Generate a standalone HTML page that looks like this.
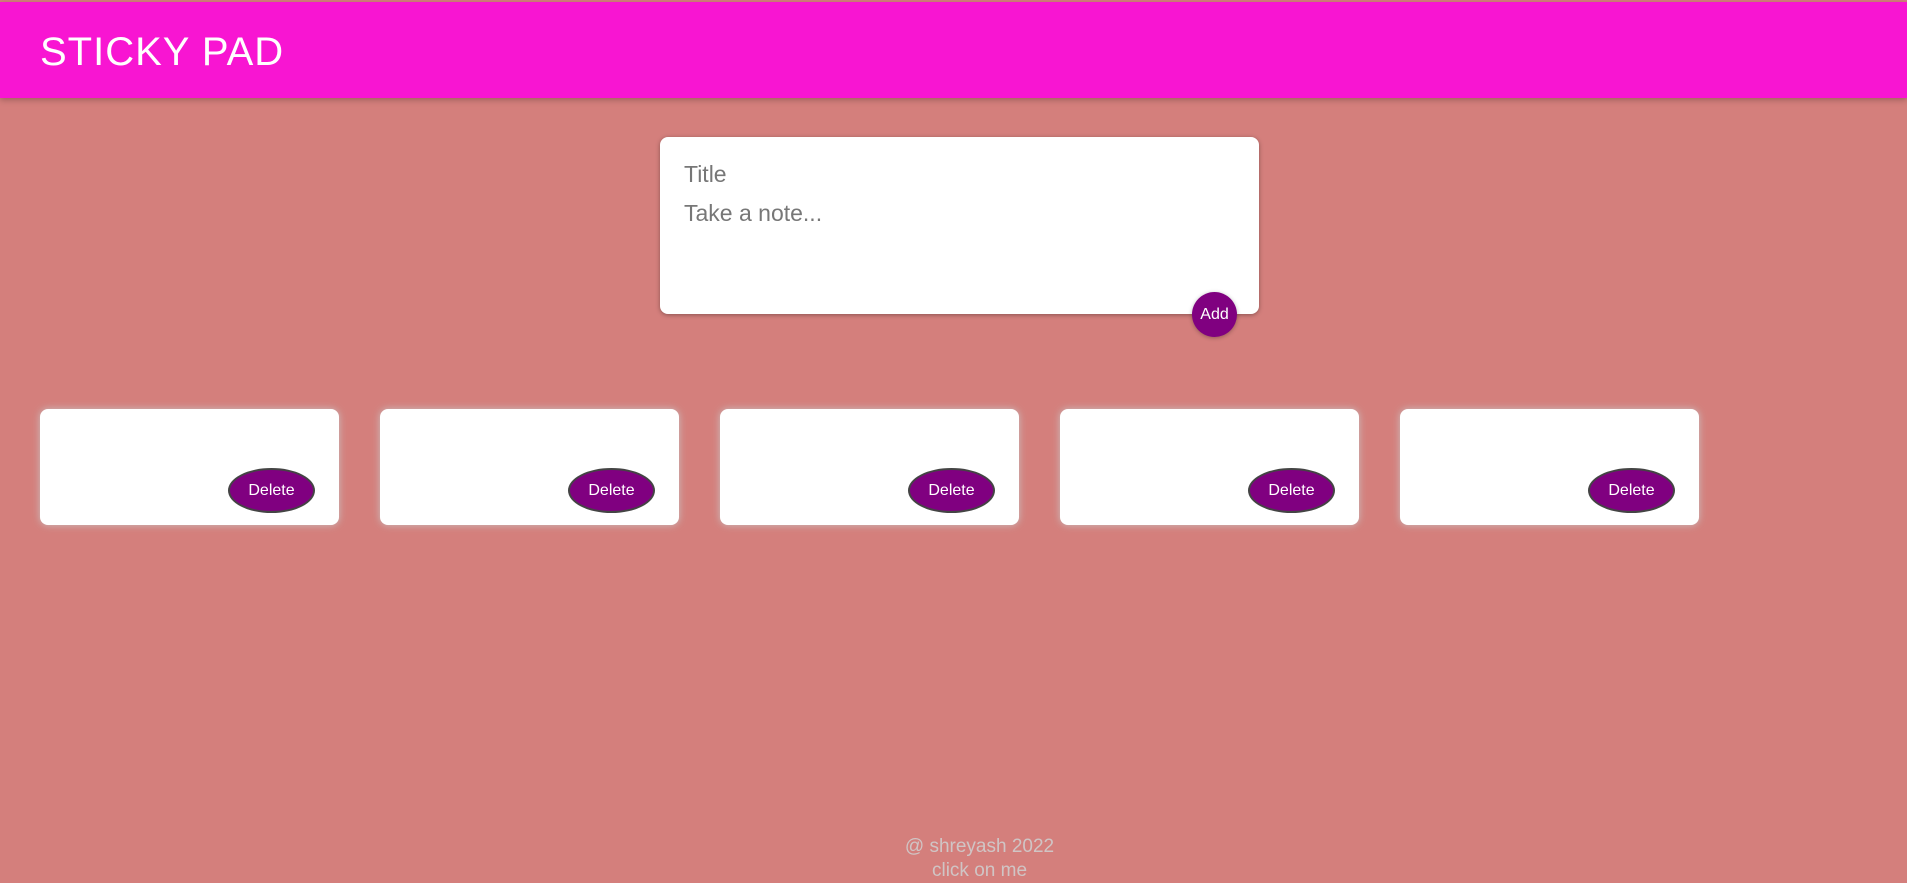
<!DOCTYPE html>
<html><head><style>
*{margin:0;padding:0;box-sizing:border-box}
body{width:1907px;height:880px;background:#d47f7c;font-family:"Liberation Sans",sans-serif;position:relative;overflow:hidden}
.hdr{position:absolute;left:0;top:2px;width:1907px;height:96px;background:#f815d2;box-shadow:0 2px 6px rgba(0,0,0,.25)}
.hdr h1{position:absolute;left:40px;top:28px;font-size:40px;font-weight:normal;color:#fff;letter-spacing:1px}
.form{position:absolute;left:660px;top:137px;width:599px;height:177px;background:#fff;border-radius:8px;box-shadow:0 1px 5px rgba(0,0,0,.35)}
.form .t{position:absolute;left:24px;top:24px;font-size:23px;color:#777}
.form .n{position:absolute;left:24px;top:63px;font-size:23px;color:#777}
.add{position:absolute;left:1192px;top:292px;width:45px;height:45px;border-radius:50%;background:#800080;color:#fff;font-size:16px;text-align:center;line-height:45px;box-shadow:0 1px 4px rgba(0,0,0,.3)}
.card{position:absolute;top:409px;width:299px;height:116px;background:#fff;border-radius:8px;box-shadow:0 0 8px rgba(200,200,200,.9)}
.del{position:absolute;left:188px;top:59px;width:87px;height:45px;border-radius:50%;background:#800080;border:2px solid #444;color:#fff;font-size:16px;text-align:center;line-height:41px}
.ft{position:absolute;left:0;width:1907px;text-align:center;color:#d0c5c5;font-size:19px;top:835px;line-height:24px;padding-left:52px}
</style></head><body>
<div class="hdr"><h1>STICKY PAD</h1></div>
<div class="form"><div class="t">Title</div><div class="n">Take a note...</div></div>
<div class="add">Add</div>
<div class="card" style="left:40px"><div class="del">Delete</div></div>
<div class="card" style="left:380px"><div class="del">Delete</div></div>
<div class="card" style="left:720px"><div class="del">Delete</div></div>
<div class="card" style="left:1060px"><div class="del">Delete</div></div>
<div class="card" style="left:1400px"><div class="del">Delete</div></div>
<div class="ft">@ shreyash 2022<br>click on me</div>
</body></html>
